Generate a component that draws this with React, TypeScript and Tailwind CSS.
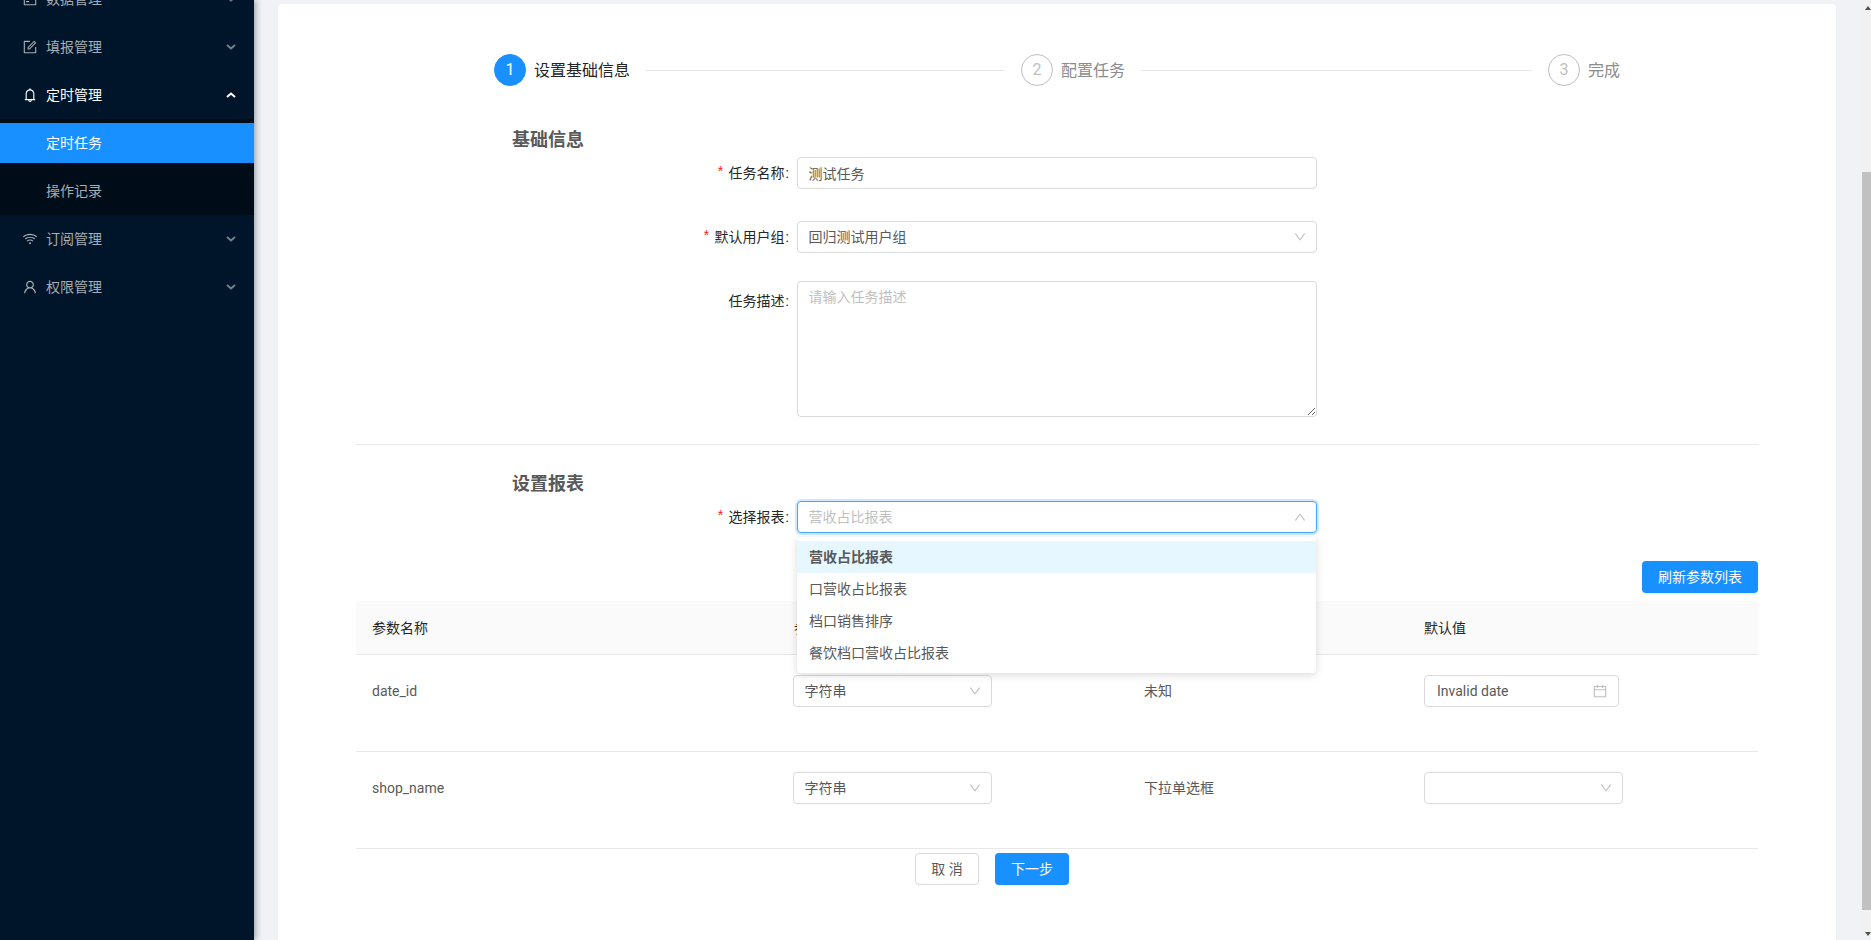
import React from "react";

const PATHS = {
  down: "M884 256h-75c-5.1 0-9.9 2.5-12.9 6.6L512 654.2 227.9 262.6c-3-4.1-7.8-6.6-12.9-6.6h-75c-6.5 0-10.3 7.4-6.5 12.7l352.6 486.1c12.8 17.6 39 17.6 51.7 0l352.6-486.1c3.9-5.3.1-12.7-6.4-12.7z",
  up: "M890.5 755.3L537.9 269.2c-12.8-17.6-39-17.6-51.7 0L133.5 755.3A8 8 0 0 0 140 768h75c5.1 0 9.9-2.5 12.9-6.6L512 369.8l284.1 391.6c3 4.1 7.8 6.6 12.9 6.6h75c6.5 0 10.3-7.7 6.5-12.7z",
  form: "M904 512h-56c-4.4 0-8 3.6-8 8v320H184V184h320c4.4 0 8-3.6 8-8v-56c0-4.4-3.6-8-8-8H144c-17.7 0-32 14.3-32 32v736c0 17.7 14.3 32 32 32h736c17.7 0 32-14.3 32-32V520c0-4.4-3.6-8-8-8zM355.9 534.9L354 653.8c-.1 8.9 7.1 16.2 16 16.2h.4l118-2.9c2-.1 4-.9 5.4-2.3l415.9-415c3.1-3.1 3.1-8.2 0-11.3L785.4 114.3c-1.6-1.6-3.6-2.3-5.7-2.3s-4.1.8-5.7 2.3l-415.8 415a8.3 8.3 0 0 0-2.3 5.6zm63.5 23.6L779.7 199l45.2 45.1-360.5 359.7-45.7 1.1.7-46.4z",
  bell: "M816 768h-24V428c0-141.1-104.3-257.7-240-277.1V112c0-22.1-17.9-40-40-40s-40 17.9-40 40v38.9c-135.7 19.4-240 136-240 277.1v340h-24c-17.7 0-32 14.3-32 32v32c0 4.4 3.6 8 8 8h216c0 61.8 50.2 112 112 112s112-50.2 112-112h216c4.4 0 8-3.6 8-8v-32c0-17.7-14.3-32-32-32zM512 888c-26.5 0-48-21.5-48-48h96c0 26.5-21.5 48-48 48zM304 768V428c0-55.6 21.6-107.8 60.9-147.1S456.4 220 512 220c55.6 0 107.8 21.6 147.1 60.9S720 372.4 720 428v340H304z",
  wifi: "M723 620.5C666.8 571.6 593.4 542 513 542s-153.8 29.6-210.1 78.6a8.1 8.1 0 0 0-.8 11.2l36 42.9c2.9 3.4 8 3.8 11.4.9C393.1 637.2 450.3 614 513 614s119.9 23.2 163.5 61.5c3.4 2.9 8.5 2.5 11.4-.9l36-42.9c2.8-3.3 2.4-8.3-.9-11.2zm117.4-140.1C751.7 406.5 637.6 362 513 362s-238.7 44.5-327.5 118.4a8.05 8.05 0 0 0-1 11.3l36 42.9c2.8 3.4 7.9 3.8 11.2 1C308 472.2 406.1 434 513 434s205 38.2 281.2 101.6c3.4 2.8 8.4 2.4 11.2-1l36-42.9c2.8-3.4 2.4-8.5-1-11.3zm116.7-139C835.7 241.8 680.3 182 511 182c-168.2 0-322.6 59-443.7 157.4a8 8 0 0 0-1.1 11.4l36 42.9c2.8 3.3 7.8 3.8 11.1 1.1C222 306.7 360.3 254 511 254c151.8 0 291 53.5 400 142.7 3.4 2.8 8.4 2.3 11.2-1.1l36-42.9c2.9-3.4 2.4-8.5-1.1-11.3zM448 778a64 64 0 1 0 128 0 64 64 0 1 0-128 0z",
  user: "M858.5 763.6a374 374 0 0 0-80.6-119.5 375.63 375.63 0 0 0-119.5-80.6c-.4-.2-.8-.3-1.2-.5C719.5 518 760 444.7 760 362c0-137-111-248-248-248S264 225 264 362c0 82.7 40.5 156 102.8 201.1-.4.2-.8.3-1.2.5-44.8 18.9-85 46-119.5 80.6a375.63 375.63 0 0 0-80.6 119.5A371.7 371.7 0 0 0 136 901.8a8 8 0 0 0 8 8.2h60c4.4 0 7.9-3.5 8-7.8 2-77.2 33-149.5 87.8-204.3 56.7-56.7 132-87.9 212.2-87.9s155.5 31.2 212.2 87.9C779 752.7 810 825 812 902.2c.1 4.4 3.6 7.8 8 7.8h60a8 8 0 0 0 8-8.2c-1-47.8-10.9-94.3-29.5-138.2zM512 534c-45.9 0-89.1-17.9-121.6-50.4S340 407.9 340 362c0-45.9 17.9-89.1 50.4-121.6S466.1 190 512 190s89.1 17.9 121.6 50.4S684 316.1 684 362c0 45.9-17.9 89.1-50.4 121.6S557.9 534 512 534z",
  calendar: "M880 184H712v-64c0-4.4-3.6-8-8-8h-56c-4.4 0-8 3.6-8 8v64H384v-64c0-4.4-3.6-8-8-8h-56c-4.4 0-8 3.6-8 8v64H144c-17.7 0-32 14.3-32 32v664c0 17.7 14.3 32 32 32h736c17.7 0 32-14.3 32-32V216c0-17.7-14.3-32-32-32zm-40 656H184V460h656v380zM184 392V256h128v48c0 4.4 3.6 8 8 8h56c4.4 0 8-3.6 8-8v-48h256v48c0 4.4 3.6 8 8 8h56c4.4 0 8-3.6 8-8v-48h128v136H184z",
  data: "M880 112H144c-17.7 0-32 14.3-32 32v736c0 17.7 14.3 32 32 32h736c17.7 0 32-14.3 32-32V144c0-17.7-14.3-32-32-32zM184 184h656v264H184V184zm656 656H184V520h656v320zM256 640h200v72H256z",
};

function Ico({ d, size, className }: { d: string; size: number; className?: string }) {
  return (
    <svg viewBox="0 0 1024 1024" width={size} height={size} fill="currentColor" className={`shrink-0 ${className ?? ""}`}>
      <path d={d} />
    </svg>
  );
}

function MenuArrow({ up }: { up?: boolean }) {
  return (
    <svg width="10" height="6" viewBox="0 0 10 6" fill="none" stroke="currentColor" strokeWidth="2" className={`ml-auto mr-[18px] shrink-0 ${up ? "" : "opacity-70"}`}>
      <polyline points={up ? "1,5 5,1.5 9,5" : "1,1 5,4.5 9,1"} />
    </svg>
  );
}

function MenuRow({ icon, label, open, active }: { icon: string; label: string; open?: boolean; active?: boolean }) {
  return (
    <div className={`flex h-10 items-center pl-[22px] text-sm ${active ? "text-white" : "text-[#a6adb4]"}`}>
      <Ico d={icon} size={16} className="mr-2" />
      <span>{label}</span>
      <MenuArrow up={open} />
    </div>
  );
}

function Step({ n, label, active, last }: { n: number; label: string; active?: boolean; last?: boolean }) {
  return (
    <div className={`flex items-center ${last ? "" : "w-[527px]"}`}>
      <div
        className={`flex size-8 shrink-0 items-center justify-center rounded-full border text-base ${
          active ? "border-[#1890ff] bg-[#1890ff] text-white" : "border-[#bfbfbf] text-[#bfbfbf]"
        }`}
      >
        {n}
      </div>
      <span className={`ml-2 pt-[2px] text-base whitespace-nowrap ${active ? "text-[#262626]" : "text-[#8c8c8c]"}`}>{label}</span>
      {!last && <div className="mx-4 h-px flex-1 bg-[#e8e8e8]" />}
    </div>
  );
}

function FormRow({ label, required, top, children }: { label: string; required?: boolean; top?: boolean; children: React.ReactNode }) {
  return (
    <div className="flex">
      <div className={`flex h-8 w-[441px] shrink-0 items-center justify-end text-sm text-[#262626] ${top ? "mt-1" : ""}`}>
        {required && <span className="mr-1 font-['Liberation_Mono'] text-[#f5222d]">*</span>}
        <span>{label}</span>
        <span className="mr-2 ml-[1px]">:</span>
      </div>
      {children}
    </div>
  );
}

function Select({ value, width, placeholder, focused, children }: { value?: string; width: string; placeholder?: string; focused?: boolean; children?: React.ReactNode }) {
  return (
    <div
      className={`relative flex h-8 items-center justify-between rounded border bg-white pr-[9px] pl-[10.5px] text-sm ${width} ${
        focused ? "border-[#40a9ff] shadow-[0_0_0_2px_rgba(24,144,255,0.2)]" : "border-[#d9d9d9]"
      }`}
    >
      <span className={placeholder ? "text-[#bfbfbf]" : "text-[#595959]"}>{value ?? placeholder}</span>
      <Ico d={focused ? PATHS.up : PATHS.down} size={14} className="text-[#bfbfbf]" />
      {children}
    </div>
  );
}

const OPTIONS = ["营收占比报表", "口营收占比报表", "档口销售排序", "餐饮档口营收占比报表"];

function TableRow({ name, type, control }: { name: string; type: string; control: React.ReactNode }) {
  return (
    <div className="grid h-[97px] grid-cols-[422px_350px_280px_350px] border-b border-[#e8e8e8] pt-5 text-sm text-[#595959]">
      <div className="flex h-8 items-center pl-4">{name}</div>
      <div className="pl-[15px]">
        <Select value="字符串" width="w-[199px]" />
      </div>
      <div className="flex h-8 items-center pl-4">{type}</div>
      <div className="pl-4">{control}</div>
    </div>
  );
}

export default function App() {
  return (
    <div className="flex h-[940px] w-[1871px] overflow-hidden bg-[#f0f2f5] font-['Roboto','Noto_Sans_CJK_SC',sans-serif]">
      <aside className="z-10 h-full w-[254px] shrink-0 overflow-hidden bg-[#001529] shadow-[2px_0_6px_rgba(0,21,41,0.35)]">
        <div className="mt-[-21px] flex flex-col">
          <MenuRow icon={PATHS.data} label="数据管理" />
          <div className="mt-2">
            <MenuRow icon={PATHS.form} label="填报管理" />
          </div>
          <div className="mt-2">
            <MenuRow icon={PATHS.bell} label="定时管理" open active />
          </div>
          <div className="mt-1 flex flex-col gap-2 bg-[#000c17] py-1 text-sm">
            <div className="flex h-10 items-center bg-[#1890ff] pl-[46px] text-white">定时任务</div>
            <div className="flex h-10 items-center pl-[46px] text-[#a6adb4]">操作记录</div>
          </div>
          <div className="mt-1">
            <MenuRow icon={PATHS.wifi} label="订阅管理" />
          </div>
          <div className="mt-2">
            <MenuRow icon={PATHS.user} label="权限管理" />
          </div>
        </div>
      </aside>

      <main className="flex min-w-0 flex-1 pt-1 pl-6">
        <section className="h-[1000px] w-[1558px] shrink-0 rounded bg-white px-[78px] pt-[50px]">
          <div className="ml-[138px] flex">
            <Step n={1} label="设置基础信息" active />
            <Step n={2} label="配置任务" />
            <Step n={3} label="完成" last />
          </div>

          <h2 className="mt-[42px] ml-[156px] h-6 text-lg leading-6 font-semibold text-[#595959]">基础信息</h2>
          <div className="mt-[5px] flex flex-col">
            <FormRow label="任务名称" required>
              <input
                readOnly
                value="测试任务"
                className="h-8 w-[520px] rounded border border-[#d9d9d9] px-[10.5px] text-sm text-[#595959] outline-none"
              />
            </FormRow>
            <div className="mt-8">
              <FormRow label="默认用户组" required>
                <Select value="回归测试用户组" width="w-[520px]" />
              </FormRow>
            </div>
            <div className="mt-7">
              <FormRow label="任务描述" top>
                <textarea
                  readOnly
                  placeholder="请输入任务描述"
                  className="h-[136px] w-[520px] rounded border border-[#d9d9d9] px-[10.5px] py-[4px] text-sm leading-[22px] text-[#595959] outline-none placeholder:text-[#bfbfbf]"
                />
              </FormRow>
            </div>
          </div>

          <div className="mt-[27px] h-px bg-[#e8e8e8]" />

          <h2 className="mt-[27px] ml-[156px] h-6 text-lg leading-6 font-semibold text-[#595959]">设置报表</h2>
          <div className="mt-[5px]">
            <FormRow label="选择报表" required>
              <Select placeholder="营收占比报表" width="w-[520px]" focused>
                <div className="absolute top-[35px] left-[-1px] z-20 w-[519px] rounded bg-white py-1 text-sm text-[#595959] shadow-[0_2px_8px_rgba(0,0,0,0.15)]">
                  {OPTIONS.map((o, i) => (
                    <div key={o} className={`flex h-8 items-center px-3 ${i === 0 ? "bg-[#e6f7ff] font-semibold" : ""}`}>
                      {o}
                    </div>
                  ))}
                </div>
              </Select>
            </FormRow>
          </div>

          <div className="mt-7 flex justify-end">
            <button className="h-8 w-[116px] rounded bg-[#1890ff] text-sm text-white shadow-[0_2px_0_rgba(0,0,0,0.045)]">刷新参数列表</button>
          </div>

          <div className="mt-2">
            <div className="grid h-[54px] grid-cols-[422px_350px_280px_350px] items-center rounded-t border-b border-[#e8e8e8] bg-[#fafafa] text-sm text-[#262626]">
              <div className="pl-4">参数名称</div>
              <div className="pl-4">参数类型</div>
              <div className="pl-4">控件类型</div>
              <div className="pl-4">默认值</div>
            </div>
            <TableRow
              name="date_id"
              type="未知"
              control={
                <div className="flex h-8 w-[195px] items-center justify-between rounded border border-[#d9d9d9] pr-[10px] pl-3 text-sm text-[#595959]">
                  <span>Invalid date</span>
                  <Ico d={PATHS.calendar} size={16} className="text-[#bfbfbf]" />
                </div>
              }
            />
            <TableRow name="shop_name" type="下拉单选框" control={<Select width="w-[199px]" value="" />} />
          </div>

          <div className="mt-1 ml-[559px] flex gap-4">
            <button className="h-8 w-16 rounded border border-[#d9d9d9] bg-white text-sm text-[#595959]">取 消</button>
            <button className="h-8 w-[74px] rounded bg-[#1890ff] text-sm text-white">下一步</button>
          </div>
        </section>

        <div className="ml-auto flex h-[936px] mt-[-4px] w-[9px] shrink-0 flex-col bg-[#f1f1f1]">
          <div className="flex h-[172px] justify-end pt-[6px]">
            <svg width="6" height="4" viewBox="0 0 6 4" fill="#505050"><polygon points="3,0 6,4 0,4" /></svg>
          </div>
          <div className="h-[738px] bg-[#c1c1c1]" />
          <div className="flex justify-end pt-[22px]">
            <svg width="6" height="4" viewBox="0 0 6 4" fill="#505050"><polygon points="0,0 6,0 3,4" /></svg>
          </div>
        </div>
      </main>
    </div>
  );
}
